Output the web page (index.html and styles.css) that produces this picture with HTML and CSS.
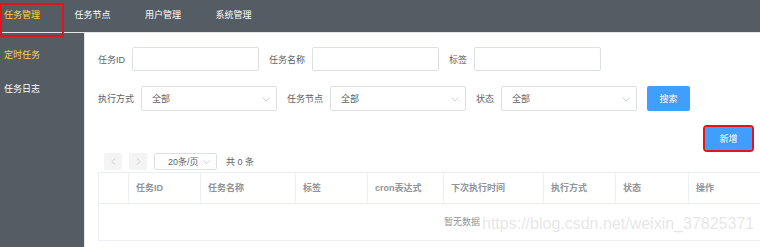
FILE: index.html
```html
<!DOCTYPE html>
<html lang="zh-CN">
<head>
  <meta charset="UTF-8">
  <meta name="viewport" content="width=device-width, initial-scale=1.0">
  <title>定时任务</title>
  <link rel="stylesheet" href="styles.css">
</head>
<body>
  <div class="header">
    <div class="menu-item active">任务管理</div>
    <div class="menu-item">任务节点</div>
    <div class="menu-item">用户管理</div>
    <div class="menu-item">系统管理</div>
  </div>

  <div class="layout">
    <aside class="aside">
      <div class="side-item active">定时任务</div>
      <div class="side-item">任务日志</div>
    </aside>

    <main class="main">
      <!-- search form -->
      <div class="form-row">
        <div class="form-item">
          <span class="form-label">任务ID</span>
          <div class="input"></div>
        </div>
        <div class="form-item">
          <span class="form-label">任务名称</span>
          <div class="input"></div>
        </div>
        <div class="form-item">
          <span class="form-label">标签</span>
          <div class="input"></div>
        </div>
      </div>

      <div class="form-row row-select">
        <div class="form-item">
          <span class="form-label">执行方式</span>
          <div class="select">全部
            <svg class="arrow" width="8" height="5" viewBox="0 0 8 5"><polyline points="0.5,0.5 4,4 7.5,0.5" /></svg>
          </div>
        </div>
        <div class="form-item">
          <span class="form-label">任务节点</span>
          <div class="select">全部
            <svg class="arrow" width="8" height="5" viewBox="0 0 8 5"><polyline points="0.5,0.5 4,4 7.5,0.5" /></svg>
          </div>
        </div>
        <div class="form-item">
          <span class="form-label">状态</span>
          <div class="select">全部
            <svg class="arrow" width="8" height="5" viewBox="0 0 8 5"><polyline points="0.5,0.5 4,4 7.5,0.5" /></svg>
          </div>
        </div>
        <button class="btn btn-search">搜索</button>
      </div>

      <div class="toolbar">
        <button class="btn btn-add">新增</button>
      </div>

      <!-- pagination -->
      <div class="pager">
        <span class="pager-btn">
          <svg width="5" height="7" viewBox="0 0 5 7"><polyline points="4,0.5 1,3.5 4,6.5" /></svg>
        </span>
        <span class="pager-btn">
          <svg width="5" height="7" viewBox="0 0 5 7"><polyline points="1,0.5 4,3.5 1,6.5" /></svg>
        </span>
        <div class="pager-size">20条/页
          <svg class="arrow" width="7" height="4" viewBox="0 0 7 4"><polyline points="0.5,0.5 3.5,3.5 6.5,0.5" /></svg>
        </div>
        <span class="pager-total">共 0 条</span>
      </div>

      <!-- task table -->
      <div class="table">
        <div class="table-head">
          <div class="th col-check"></div>
          <div class="th col-id">任务ID</div>
          <div class="th col-name">任务名称</div>
          <div class="th col-tag">标签</div>
          <div class="th col-cron">cron表达式</div>
          <div class="th col-next">下次执行时间</div>
          <div class="th col-mode">执行方式</div>
          <div class="th col-status">状态</div>
          <div class="th col-op">操作</div>
        </div>
        <div class="table-empty">暂无数据</div>
      </div>
    </main>
  </div>

  <div class="watermark">https://blog.csdn.net/weixin_37825371</div>
</body>
</html>
```

FILE: styles.css
```css
* {
  box-sizing: border-box;
}

body {
  margin: 0;
  width: 760px;
  height: 247px;
  overflow: hidden;
  position: relative;
  font-family: "Liberation Sans", "Noto Sans CJK SC", sans-serif;
  font-size: 9px;
  color: #606266;
  background: #fff;
}

/* top menu */
.header {
  display: flex;
  height: 33px;
  background: #545c64;
  border-bottom: 1px solid #e6e6e6;
}

.menu-item {
  position: relative;
  width: 70.5px;
  padding-left: 4px;
  line-height: 30px;
  color: #fff;
}

.menu-item.active {
  color: #ffd04b;
}

.menu-item.active::after {
  content: "";
  position: absolute;
  left: 0;
  top: 3px;
  width: 60px;
  height: 30px;
  border: 2px solid #e5141b;
}

.layout {
  display: flex;
  height: 214px;
}

/* side menu */
.aside {
  width: 85px;
  padding-top: 5px;
  background: #545c64;
  border-right: 1px solid #e6e6e6;
}

.side-item {
  height: 34px;
  line-height: 34px;
  padding-left: 4px;
  color: #fff;
}

.side-item.active {
  color: #ffd04b;
}

.main {
  flex: 1;
  min-width: 0;
  overflow: hidden;
  padding: 14px 0 0 13px;
}

/* form */
.form-row {
  display: flex;
  align-items: center;
  height: 24px;
}

.row-select {
  height: 25px;
  margin-top: 15px;
}

.form-item {
  display: flex;
  align-items: center;
  gap: 7px;
  height: 100%;
  margin-right: 10px;
}

.form-label {
  color: #606266;
}

.input,
.select {
  height: 100%;
  border: 1px solid #dcdfe6;
  border-radius: 2px;
  background: #fff;
}

.input {
  width: 127px;
}

.select {
  position: relative;
  display: flex;
  align-items: center;
  width: 136px;
  padding-left: 10px;
  color: #606266;
}

.arrow {
  position: absolute;
  right: 6px;
  top: 50%;
  margin-top: -2px;
  fill: none;
  stroke: #c0c4cc;
  stroke-width: 0.8;
}

.btn {
  border: none;
  border-radius: 2px;
  background: #409eff;
  color: #fff;
  font-family: inherit;
  font-size: 9px;
  padding: 0;
  cursor: pointer;
}

.btn-search {
  width: 43px;
  height: 25px;
}

.toolbar {
  display: flex;
  justify-content: flex-end;
  margin-top: 16px;
  padding-right: 8px;
}

.btn-add {
  width: 47px;
  height: 23px;
  outline: 2px solid #e5141b;
  outline-offset: 0;
}

/* pagination */
.pager {
  display: flex;
  align-items: center;
  gap: 7px;
  height: 17px;
  margin-top: 3px;
  padding-left: 6px;
}

.pager-btn {
  display: flex;
  align-items: center;
  justify-content: center;
  width: 18px;
  height: 17px;
  background: #f4f4f5;
  border-radius: 2px;
}

.pager-btn svg {
  fill: none;
  stroke: #c0c4cc;
  stroke-width: 0.8;
}

.pager-size {
  position: relative;
  display: flex;
  align-items: center;
  width: 63px;
  height: 17px;
  padding-left: 13px;
  border: 1px solid #dcdfe6;
  border-radius: 2px;
}

.pager-size .arrow {
  right: 6px;
}

.pager-total {
  margin-left: 2px;
  color: #606266;
}

/* table */
.table {
  width: 728px;
  margin-top: 2px;
  border: 1px solid #ebeef5;
}

.table-head {
  display: flex;
  height: 31px;
  border-bottom: 1px solid #ebeef5;
}

.th {
  flex: none;
  padding-left: 7px;
  line-height: 30px;
  color: #909399;
  font-weight: bold;
  border-right: 1px solid #ebeef5;
}

.col-check { width: 30px; }
.col-id { width: 72px; }
.col-name { width: 95px; }
.col-tag { width: 72px; }
.col-cron { width: 76px; }
.col-next { width: 100px; }
.col-mode { width: 72px; }
.col-status { width: 73px; }
.col-op { width: 136px; border-right: none; }

.table-empty {
  height: 36px;
  line-height: 36px;
  text-align: center;
  color: #909399;
}

/* blog watermark over the page */
.watermark {
  position: absolute;
  left: 482px;
  top: 215px;
  font-family: "Liberation Sans", sans-serif;
  font-size: 16px;
  color: rgba(200, 200, 200, 0.45);
  white-space: nowrap;
}
```
